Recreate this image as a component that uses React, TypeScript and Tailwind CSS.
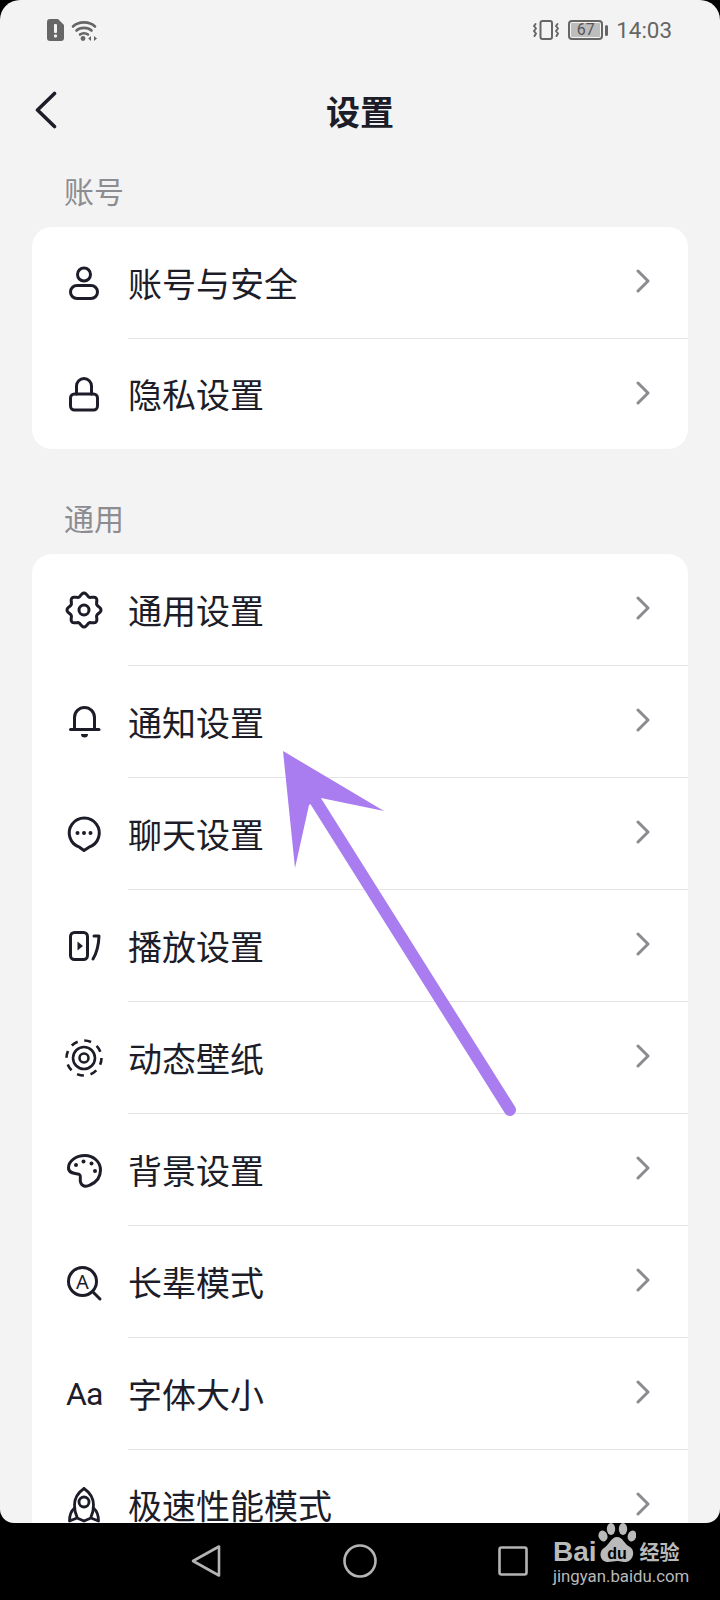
import type { ReactNode } from "react";

const ink = "#1c1d29";

function Ic({ children }: { children: ReactNode }) {
    return (
        <svg
            viewBox="0 0 36 36"
            fill="none"
            stroke={ink}
            strokeWidth="3"
            strokeLinecap="round"
            strokeLinejoin="round"
            className="w-9 h-9 overflow-visible"
        >
            {children}
        </svg>
    );
}

// scalloped outline for the gear
const gearPath = (() => {
    const pts: string[] = [];
    for (let i = 0; i < 96; i++) {
        const a = (i / 96) * Math.PI * 2;
        const r = 15.4 + 1.6 * Math.cos(8 * a);
        pts.push(`${(18 + r * Math.sin(a)).toFixed(2)} ${(18 - r * Math.cos(a)).toFixed(2)}`);
    }
    return "M" + pts.join("L") + "Z";
})();

const icons: Record<string, ReactNode> = {
    user: (
        <Ic>
            <circle cx="18" cy="9.5" r="6.5" />
            <rect x="4.5" y="20.5" width="27" height="13" rx="6.5" />
        </Ic>
    ),
    lock: (
        <Ic>
            <rect x="4.5" y="18" width="27" height="16" rx="4" />
            <path d="M10.5 18V10a7.5 7.5 0 0 1 15 0v8" />
        </Ic>
    ),
    gear: (
        <Ic>
            <path d={gearPath} />
            <circle cx="18" cy="18" r="5" />
        </Ic>
    ),
    bell: (
        <Ic>
            <path d="M8.5 25V13.5a10 10 0 0 1 20 0V25" />
            <path d="M4.5 25.5H33" />
            <path d="M15 30H22a3.5 3.5 0 0 1-7 0Z" fill={ink} stroke="none" />
        </Ic>
    ),
    chat: (
        <Ic>
            <path d="M13.5 31.2A15 15 0 1 1 23 31.2L18 34.5Z" />
            <circle cx="11.5" cy="17" r="2" fill={ink} stroke="none" />
            <circle cx="18" cy="17" r="2" fill={ink} stroke="none" />
            <circle cx="24.5" cy="17" r="2" fill={ink} stroke="none" />
        </Ic>
    ),
    play: (
        <Ic>
            <rect x="4.5" y="4.5" width="17" height="27" rx="4" />
            <path d="M11.5 13.5L17 18L11.5 22.5Z" fill={ink} stroke="none" />
            <path d="M28 8H33Q32.5 22 27 31" />
        </Ic>
    ),
    live: (
        <Ic>
            <circle cx="18" cy="18" r="17.5" strokeDasharray="7 6.7" strokeWidth="2.6" strokeLinecap="butt" />
            <circle cx="18" cy="18" r="11" strokeWidth="2.6" />
            <circle cx="18" cy="18" r="4.5" strokeWidth="2.6" />
        </Ic>
    ),
    palette: (
        <Ic>
            <path d="M19 3.5C10 3.5 2.5 9 2.5 16C2.5 21 8 21.5 12 22C16 22.5 13.5 26 14.5 30C15.5 34.5 20 35 24 33C31 30 34.5 24.5 34.5 18C34.5 10 27.5 3.5 19 3.5Z" />
            <circle cx="10" cy="13" r="2" fill={ink} stroke="none" />
            <circle cx="17.5" cy="9.5" r="2" fill={ink} stroke="none" />
            <circle cx="25.5" cy="11.5" r="2" fill={ink} stroke="none" />
            <circle cx="29" cy="19" r="2" fill={ink} stroke="none" />
        </Ic>
    ),
    elder: (
        <Ic>
            <circle cx="16.5" cy="17.5" r="14" />
            <path d="M26.5 27.5L34 35" />
            <text x="16.5" y="24.5" textAnchor="middle" fontFamily="'Noto Sans', sans-serif" fontSize="20" fill={ink} stroke="none">
                A
            </text>
        </Ic>
    ),
    font: (
        <span className="block w-9 text-center font-['Roboto',sans-serif] text-[32px] leading-9 tracking-[-1px] text-[#1c1d29]">
            Aa
        </span>
    ),
    rocket: (
        <Ic>
            <path d="M18 1.5C11.5 6 8.5 12 8.5 18C8.5 23 9.5 27 11 30M18 1.5C24.5 6 27.5 12 27.5 18C27.5 23 26.5 27 25 30" strokeWidth="2.8" />
            <circle cx="18" cy="15" r="5" strokeWidth="2.8" />
            <path d="M8.5 21C5 24 3.5 28 3.5 34L11 31L18 34L25 31L32.5 34C32.5 28 31 24 27.5 21" strokeWidth="2.8" />
        </Ic>
    ),
};

const accountRows = [
    { icon: "user", label: "账号与安全" },
    { icon: "lock", label: "隐私设置" },
];

const generalRows = [
    { icon: "gear", label: "通用设置" },
    { icon: "bell", label: "通知设置" },
    { icon: "chat", label: "聊天设置" },
    { icon: "play", label: "播放设置" },
    { icon: "live", label: "动态壁纸" },
    { icon: "palette", label: "背景设置" },
    { icon: "elder", label: "长辈模式" },
    { icon: "font", label: "字体大小" },
    { icon: "rocket", label: "极速性能模式" },
];

function Row({ icon, label, last }: { icon: string; label: string; last: boolean }) {
    return (
        <>
            <div className={`${last ? "h-[110px]" : "h-[111px]"} flex items-center pl-[34px] pr-[38px]`}>
                <div className="w-9 h-9 shrink-0">{icons[icon]}</div>
                <span className="ml-[26px] flex-1 text-[34px] leading-[44px] text-[#1c1d29]">{label}</span>
                <svg viewBox="0 0 14 24" fill="none" stroke="#8b8b90" strokeWidth="3" strokeLinecap="round" strokeLinejoin="round" className="w-[14px] h-6 -mt-[3px]">
                    <path d="M2 2L12 12L2 22" />
                </svg>
            </div>
            {!last && <div className="ml-[96px] h-px bg-[#e4e4e6]" />}
        </>
    );
}

function Card({ rows, className }: { rows: { icon: string; label: string }[]; className?: string }) {
    return (
        <div className={`mx-8 bg-white rounded-[20px] ${className ?? ""}`}>
            {rows.map((r, i) => (
                <Row key={r.label} icon={r.icon} label={r.label} last={i === rows.length - 1} />
            ))}
        </div>
    );
}

function StatusBar() {
    return (
        <div className="h-[60px] flex items-center pl-[47px] pr-[48px]">
            <svg viewBox="0 0 17 22" className="w-[17px] h-[22px]">
                <path d="M3 0H11L17 6V19a3 3 0 0 1-3 3H3a3 3 0 0 1-3-3V3a3 3 0 0 1 3-3Z" fill="#666" />
                <rect x="7" y="5" width="3" height="9" rx="1" fill="#f3f3f3" />
                <rect x="7" y="15.5" width="3" height="3" rx="1" fill="#f3f3f3" />
            </svg>
            <svg viewBox="0 0 27 21" fill="none" stroke="#666" strokeWidth="2.6" strokeLinecap="round" className="ml-[7px] w-[27px] h-[21px]">
                <path d="M2 6.5C7.5 1 18.5 1 24 6.5" />
                <path d="M5.5 10.5C9 7 17 7 20.5 10.5" />
                <path d="M9 14.5C11 12.8 15 12.8 17 14.5" />
                <circle cx="12" cy="18.5" r="2.4" fill="#666" stroke="none" />
                <path d="M20 16V21L17.2 18.5Z" fill="#666" stroke="none" />
                <path d="M23 16V21L26 18.5Z" fill="#666" stroke="none" />
            </svg>
            <div className="flex-1" />
            <svg viewBox="0 0 27 20" fill="none" stroke="#666" strokeWidth="2" strokeLinecap="round" strokeLinejoin="round" className="w-[27px] h-5">
                <rect x="7.5" y="1" width="11.5" height="18" rx="2" />
                <path d="M2.5 4L1 6L3 8.5L1 11L3 13.5L1.5 16" />
                <path d="M24.5 4L23 6L25 8.5L23 11L25 13.5L23.5 16" />
            </svg>
            <div className="ml-[8px] w-[35px] h-5 rounded-[4px] border-2 border-[#666] p-px">
                <div className="h-full rounded-[1px] bg-[#bdbdbd] flex items-center justify-center font-['Roboto',sans-serif] text-[16px] leading-none text-[#555]">
                    67
                </div>
            </div>
            <div className="ml-[2px] w-[3px] h-[11px] rounded-sm bg-[#666]" />
            <span className="ml-[8px] font-['Roboto',sans-serif] text-[22.4px] leading-none text-[#666]">14:03</span>
        </div>
    );
}

function BaiduMark() {
    return (
        <div className="absolute left-[553px] top-0 w-[132px] text-[#bababa]">
            <div className="h-[41px] flex items-end">
                <span className="font-['Liberation_Sans',sans-serif] font-bold text-[28px] leading-[24px]">Bai</span>
                <svg viewBox="0 0 40 41" className="w-10 h-[41px] shrink-0 -ml-px">
                    <ellipse cx="7" cy="13" rx="4.4" ry="5.5" fill="#bababa" transform="rotate(-20 7 13)" />
                    <ellipse cx="15" cy="6" rx="4.2" ry="6" fill="#bababa" />
                    <ellipse cx="27" cy="6" rx="4.2" ry="6" fill="#bababa" />
                    <ellipse cx="36" cy="13" rx="4.2" ry="5.5" fill="#bababa" transform="rotate(20 36 13)" />
                    <path d="M21 14C27 14 28 21 34 24C40 28 37 39 29 39C25 39 24 38 21 38C18 38 16 39 12 39C4 39 2 29 8 25C14 21 15 14 21 14Z" fill="#bababa" />
                    <text x="21" y="36" textAnchor="middle" fontFamily="'Liberation Sans', sans-serif" fontWeight="700" fontSize="16" fill="#000">
                        du
                    </text>
                </svg>
                <span className="ml-[4px] font-['Noto_Sans_CJK_SC',sans-serif] font-bold text-[20px] leading-[24px]">经验</span>
            </div>
            <div className="mt-[2px] font-['Roboto',sans-serif] text-[16.8px] leading-5 whitespace-nowrap">jingyan.baidu.com</div>
        </div>
    );
}

export default function App() {
    return (
        <div className="relative w-[720px] h-[1600px] overflow-hidden bg-black font-['Noto_Sans_CJK_SC','Noto_Sans',sans-serif]">
            <div className="h-[1523px] bg-[#f3f3f3] rounded-t-[20px] rounded-b-[14px] overflow-hidden">
                <StatusBar />

                <div className="h-[100px] flex items-center">
                    <svg viewBox="0 0 24 38" fill="none" stroke={ink} strokeWidth="3.6" strokeLinecap="round" strokeLinejoin="round" className="ml-[34px] w-6 h-[38px] shrink-0">
                        <path d="M20.5 2.5L3.5 19L20.5 35.5" />
                    </svg>
                    <h1 className="flex-1 pr-[58px] text-center text-[34px] font-bold text-[#1c1d29]">设置</h1>
                </div>

                <div className="pl-[64px] pt-[15px] pb-[22px] text-[30px] leading-[30px] text-[#8c8c91]">账号</div>
                <Card rows={accountRows} />

                <div className="mt-[38px] pl-[64px] pt-[15px] pb-[22px] text-[30px] leading-[30px] text-[#8c8c91]">通用</div>
                <Card rows={generalRows} />
            </div>

            <div className="relative h-[77px] flex items-center pl-[190px] pb-[2px]">
                <svg viewBox="0 0 32 34" fill="none" stroke="#b4b4b4" strokeWidth="2.6" strokeLinejoin="round" className="w-8 h-[34px]">
                    <path d="M29 2.5V31.5L3 17Z" />
                </svg>
                <svg viewBox="0 0 34 34" fill="none" stroke="#b4b4b4" strokeWidth="2.6" className="ml-[121px] w-[34px] h-[34px]">
                    <circle cx="17" cy="17" r="15.5" />
                </svg>
                <svg viewBox="0 0 30 30" fill="none" stroke="#b4b4b4" strokeWidth="2.6" className="ml-[121px] w-[30px] h-[30px]">
                    <rect x="1.5" y="1.5" width="27" height="27" rx="2" />
                </svg>
                <BaiduMark />
            </div>

            {/* annotation arrow drawn over the list */}
            <svg viewBox="0 0 720 1600" className="absolute left-0 top-0 w-[720px] h-[1600px] pointer-events-none">
                <polygon points="283,751 384,811 321,798 309,805 295,868" fill="#a97cf0" />
                <line x1="315" y1="800" x2="510" y2="1110" stroke="#a97cf0" strokeWidth="12" strokeLinecap="round" />
            </svg>
        </div>
    );
}
